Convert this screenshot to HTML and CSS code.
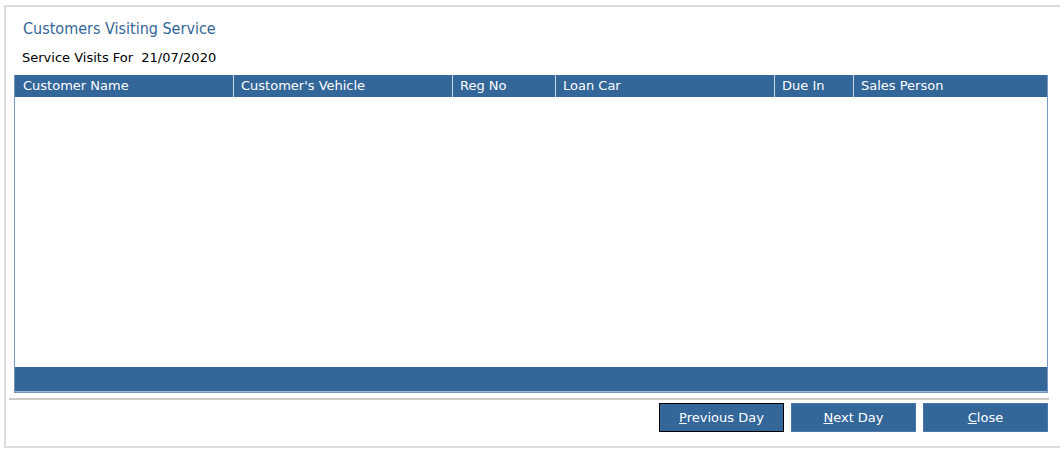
FILE: index.html
```html
<!DOCTYPE html>
<html>
<head>
<meta charset="utf-8">
<title>Customers Visiting Service</title>
<link rel="stylesheet" href="styles.css">
</head>
<body>

<div class="frame">
  <div class="title">Customers Visiting Service</div>

  <div class="visits">
    <span class="label">Service Visits For</span>
    <span class="date">21/07/2020</span>
  </div>

  <div class="grid">
    <table class="head" cellpadding="0" cellspacing="0">
      <tr>
        <td class="c1">Customer Name</td>
        <td class="c2">Customer's Vehicle</td>
        <td class="c3">Reg No</td>
        <td class="c4">Loan Car</td>
        <td class="c5">Due In</td>
        <td class="c6">Sales Person</td>
      </tr>
    </table>
    <div class="rows"></div>
    <div class="foot"></div>
  </div>

  <div class="rule"></div>

  <div class="buttons">
    <button class="btn focused"><u>P</u>revious Day</button>
    <button class="btn"><u>N</u>ext Day</button>
    <button class="btn"><u>C</u>lose</button>
  </div>
</div>

</body>
</html>
```

FILE: styles.css
```css
body {
	margin: 0px;
	padding: 0px;
	background: #ffffff;
	font-family: "DejaVu Sans", Tahoma, sans-serif;
	font-size: 13px;
	color: #000000;
}

/* outer window, right edge runs off screen */
.frame {
	margin: 5px 0px 0px 4px;
	height: 443px;
	border: 2px solid #dcdcdc;
	border-right: none;
	box-sizing: border-box;
	padding: 0px 0px 0px 3px;
}

.title {
	color: #336699;
	font-family: "DejaVu Sans Condensed", "DejaVu Sans", sans-serif;
	font-size: 16px;
	padding: 12px 0px 0px 14px;
	height: 27px;
	box-sizing: border-box;
	line-height: 20px;
}

.visits {
	padding: 16px 0px 0px 13px;
	height: 41px;
	box-sizing: border-box;
	line-height: 16px;
}

.visits .label {
	margin-right: 4px;
}

/* the list */
.grid {
	margin: 0px 0px 0px 5px;
	width: 1034px;
	border: 1px solid #7596bf;
	border-top: none;
	box-sizing: border-box;
}

.head {
	width: 100%;
	background: #336699;
	color: #ffffff;
	border-collapse: collapse;
	table-layout: fixed;
}

.head td {
	height: 22px;
	padding: 0px 0px 0px 7px;
	border-left: 1px solid #c9d6e6;
	white-space: nowrap;
	overflow: hidden;
	line-height: 22px;
}

.head td.c1 { border-left: none; width: 210px; padding-left: 8px; }
.head td.c2 { width: 211px; }
.head td.c3 { width: 95px; }
.head td.c4 { width: 211px; }
.head td.c5 { width: 71px; }

.rows {
	height: 270px;
	background: #ffffff;
}

.foot {
	height: 24px;
	background: #336699;
	border-bottom: 1px solid #9fb7d4;
}

.rule {
	margin: 5px 0px 0px 0px;
	width: 1040px;
	height: 2px;
	background: #cccccc;
}

.buttons {
	display: flex;
	justify-content: flex-end;
	gap: 7px;
	width: 1039px;
	padding-top: 3px;
}

.btn {
	width: 125px;
	height: 29px;
	background: #336699;
	color: #ffffff;
	border: 1px solid #4a78a8;
	font-family: "DejaVu Sans", Tahoma, sans-serif;
	font-size: 13px;
	padding: 0px;
	cursor: default;
}

.btn.focused {
	border: 1px solid #000000;
}
```
